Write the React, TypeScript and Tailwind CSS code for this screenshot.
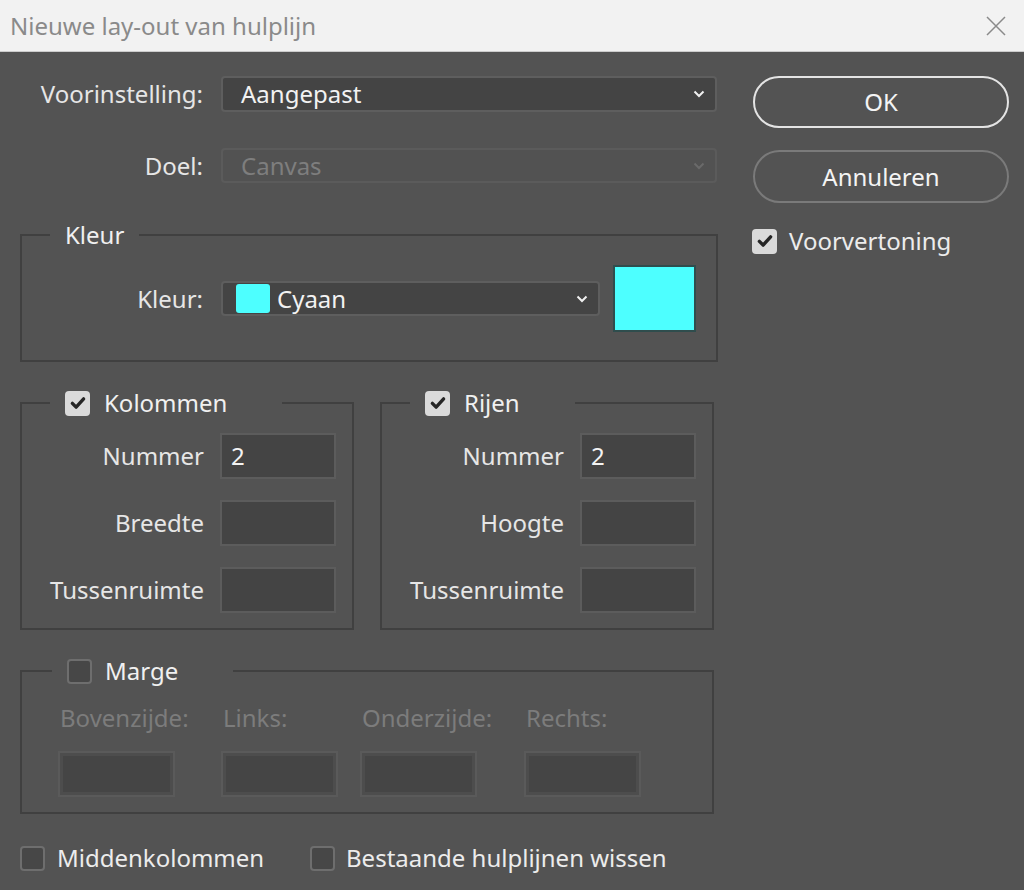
import React from "react";

function Chevron({ muted }: { muted?: boolean }) {
  return (
    <svg width="12" height="8" viewBox="0 0 12 8" className="shrink-0">
      <polyline
        points="1.5,1.5 6,6 10.5,1.5"
        fill="none"
        stroke={muted ? "#6a6a6a" : "#f0f0f0"}
        strokeWidth="2"
      />
    </svg>
  );
}

function Checkbox({ checked }: { checked?: boolean }) {
  if (checked) {
    return (
      <span className="flex h-[25px] w-[25px] shrink-0 items-center justify-center rounded-[4px] bg-[#dadada]">
        <svg width="18" height="18" viewBox="0 0 24 24">
          <path d="M4.5 12.5l5 5 10-11" fill="none" stroke="#262626" strokeWidth="4.5" strokeLinecap="round" strokeLinejoin="round" />
        </svg>
      </span>
    );
  }
  return <span className="h-[25px] w-[25px] shrink-0 rounded-[4px] border-2 border-[#6e6e6e] bg-[#474747]" />;
}

function Field({ label, value }: { label: string; value?: string }) {
  return (
    <div className="flex items-center">
      <span className="w-[182px] text-right text-[#e6e6e6]">{label}</span>
      <div className="ml-[16px] flex h-[46px] w-[116px] items-center border-2 border-[#5c5c5c] bg-[#444444] pl-[9px] text-[#f2f2f2]">
        {value}
      </div>
    </div>
  );
}

function GridBox({ title, rows }: { title: string; rows: [string, string?][] }) {
  return (
    <fieldset className="w-[334px] border-2 border-[#404040]">
      <legend className="ml-[28px] flex items-center gap-[14px] pl-[15px] pr-[55px] leading-[32px] text-[#f0f0f0]">
        <Checkbox checked />
        {title}
      </legend>
      <div className="flex flex-col gap-[21px] pb-[15px] pt-[14px]">
        {rows.map(([l, v]) => (
          <Field key={l} label={l} value={v} />
        ))}
      </div>
    </fieldset>
  );
}

function MarginCol({ label, className }: { label: string; className: string }) {
  return (
    <div className={`flex flex-col ${className}`}>
      <span className="pl-[2px] leading-[32px] text-[#7c7c7c]">{label}</span>
      <div className="mt-[17px] h-[46px] w-[117px] border-2 border-[#5a5a5a] bg-[#4d4d4d] p-[3px]">
        <div className="h-full w-full bg-[#454545]" />
      </div>
    </div>
  );
}

export default function App() {
  return (
    <div className="flex h-[890px] w-[1024px] flex-col bg-[#535353] font-['Noto_Sans',sans-serif] text-[24px] leading-[32px]">
      <div className="flex h-[52px] shrink-0 items-center justify-between border-b border-[#cccccc] bg-[#f2f2f2] pl-[10px] pr-[18px]">
        <span className="text-[24px] text-[#8a8a8a]">Nieuwe lay-out van hulplijn</span>
        <svg width="20" height="20" viewBox="0 0 20 20">
          <path d="M1 1L19 19M19 1L1 19" stroke="#8a8a8a" strokeWidth="1.5" />
        </svg>
      </div>

      <div className="flex pl-[20px] pt-[24px]">
        <div className="flex w-[698px] flex-col">
          <div className="flex items-center">
            <span className="w-[183px] text-right text-[#e6e6e6]">Voorinstelling:</span>
            <div className="ml-[18px] flex h-[36px] w-[496px] items-center justify-between rounded-[4px] border-2 border-[#5e5e5e] bg-[#444444] pl-[18px] pr-[10px] text-[#f2f2f2]">
              Aangepast
              <Chevron />
            </div>
          </div>
          <div className="mt-[36px] flex items-center">
            <span className="w-[183px] text-right text-[#e6e6e6]">Doel:</span>
            <div className="ml-[18px] flex h-[35px] w-[496px] items-center justify-between rounded-[4px] border-2 border-[#5b5b5b] bg-[#525252] pl-[18px] pr-[10px] text-[#7e7e7e]">
              Canvas
              <Chevron muted />
            </div>
          </div>

          <fieldset className="mt-[36px] border-2 border-[#404040]">
            <legend className="ml-[28px] px-[15px] leading-[32px] text-[#f0f0f0]">Kleur</legend>
            <div className="flex items-center pb-[28px] pt-[14px]">
              <span className="w-[181px] text-right text-[#e6e6e6]">Kleur:</span>
              <div className="ml-[18px] flex h-[35px] w-[379px] items-center rounded-[4px] border-2 border-[#5e5e5e] bg-[#444444] pl-[13px] pr-[10px] text-[#f2f2f2]">
                <span className="h-[29px] w-[34px] rounded-[3px] bg-[#4dffff]" />
                <span className="ml-[7px] flex-1">Cyaan</span>
                <Chevron />
              </div>
              <div className="ml-[13px] h-[67px] w-[83px] border-2 border-[#2f4d4d] bg-[#4dffff]" />
            </div>
          </fieldset>

          <div className="mt-[25px] flex gap-[26px]">
            <GridBox title="Kolommen" rows={[["Nummer", "2"], ["Breedte"], ["Tussenruimte"]]} />
            <GridBox title="Rijen" rows={[["Nummer", "2"], ["Hoogte"], ["Tussenruimte"]]} />
          </div>

          <fieldset className="mt-[25px] w-[694px] border-2 border-[#404040]">
            <legend className="ml-[30px] flex items-center gap-[13px] pl-[15px] pr-[55px] leading-[32px] text-[#f0f0f0]">
              <Checkbox />
              Marge
            </legend>
            <div className="flex pb-[15px] pl-[36px] pt-[15px]">
              <MarginCol label="Bovenzijde:" className="w-[163px]" />
              <MarginCol label="Links:" className="w-[139px]" />
              <MarginCol label="Onderzijde:" className="w-[164px]" />
              <MarginCol label="Rechts:" className="w-[117px]" />
            </div>
          </fieldset>

          <div className="mt-[28px] flex items-center text-[#ececec]">
            <div className="flex w-[290px] items-center gap-[12px]">
              <Checkbox />
              Middenkolommen
            </div>
            <div className="flex items-center gap-[11px]">
              <Checkbox />
              Bestaande hulplijnen wissen
            </div>
          </div>
        </div>

        <div className="ml-[34px] flex w-[257px] flex-col">
          <button className="ml-[1px] flex h-[52px] w-[256px] items-center justify-center rounded-full border-2 border-[#e4e4e4] text-[24px] text-[#f4f4f4]">
            OK
          </button>
          <button className="ml-[1px] mt-[22px] flex h-[53px] w-[256px] items-center justify-center rounded-full border-2 border-[#7a7a7a] text-[24px] text-[#f4f4f4]">
            Annuleren
          </button>
          <div className="mt-[22px] flex items-center gap-[12px] text-[#ececec]">
            <Checkbox checked />
            Voorvertoning
          </div>
        </div>
      </div>
    </div>
  );
}
